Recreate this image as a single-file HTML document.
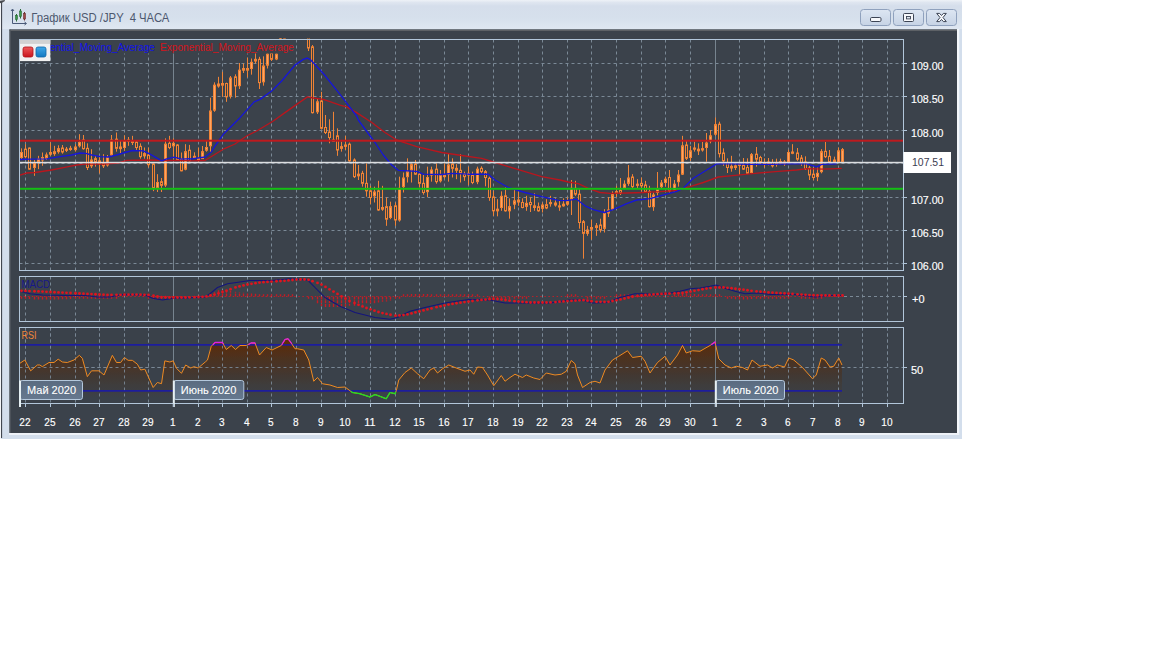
<!DOCTYPE html>
<html lang="ru"><head><meta charset="utf-8"><title>График USD /JPY 4 ЧАСА</title>
<style>html,body{margin:0;padding:0;background:#fff;}body{width:1152px;height:648px;overflow:hidden;position:relative;font-family:"Liberation Sans", sans-serif;}svg{position:absolute;left:0;top:0;display:block}text{font-family:"Liberation Sans", sans-serif;}</style>
</head><body>
<svg width="1152" height="648" viewBox="0 0 1152 648">
<defs>
<linearGradient id="tb" x1="0" y1="0" x2="0" y2="1"><stop offset="0" stop-color="#eef2f7"/><stop offset="0.08" stop-color="#dfe6f0"/><stop offset="0.2" stop-color="#d5deeb"/><stop offset="0.6" stop-color="#d6e0ec"/><stop offset="1" stop-color="#e0e8f2"/></linearGradient>
<linearGradient id="btn" x1="0" y1="0" x2="0" y2="1"><stop offset="0" stop-color="#dde6f2"/><stop offset="1" stop-color="#c6d3e5"/></linearGradient>
<linearGradient id="rsif" x1="0" y1="0" x2="0" y2="1"><stop offset="0" stop-color="#602c06"/><stop offset="0.3" stop-color="#4d3220"/><stop offset="0.6" stop-color="#423a35"/><stop offset="0.92" stop-color="#3b424b"/></linearGradient>
<linearGradient id="redsq" x1="0" y1="0" x2="0" y2="1"><stop offset="0" stop-color="#f05a5a"/><stop offset="1" stop-color="#c8141c"/></linearGradient>
<linearGradient id="blusq" x1="0" y1="0" x2="0" y2="1"><stop offset="0" stop-color="#3fa8e8"/><stop offset="1" stop-color="#1278c0"/></linearGradient>
<linearGradient id="mon" x1="0" y1="0" x2="0" y2="1"><stop offset="0" stop-color="#5a6b80"/><stop offset="1" stop-color="#66798f"/></linearGradient>
<clipPath id="cm"><rect x="19.5" y="38.5" width="884" height="232"/></clipPath>
<clipPath id="cr"><rect x="19.5" y="327.5" width="884" height="76"/></clipPath>
</defs>
<rect x="0" y="0" width="962" height="30" fill="url(#tb)"/><rect x="0" y="29.5" width="962" height="409.5" fill="#d3deec"/>
<rect x="2" y="29" width="960" height="410" fill="#d3deec"/>
<rect x="0" y="0" width="1.1" height="439" fill="#f4f6f9"/>
<rect x="1.05" y="1.5" width="1.05" height="436.5" fill="#3a3f48"/>
<path d="M0 0.8 L4.6 0 L5 0.9 L1.2 3.2 L0 3 Z" fill="#4a4c50"/>
<rect x="957" y="29" width="2.2" height="406" fill="#f4f7fb"/>
<rect x="9" y="433" width="950" height="2" fill="#eef2f8"/>
<rect x="9.5" y="29.5" width="947.5" height="403.5" fill="#3b424b"/>
<rect x="9.5" y="29.5" width="947.5" height="1.5" fill="#5d6166"/>
<rect x="9.5" y="29.5" width="1.2" height="403.5" fill="#555a61"/>
<g stroke="#4a5a78" stroke-width="1" fill="none"><path d="M12.5 9.5 V23.5 H26"/><path d="M11 11 L12.5 9 L14 11"/><path d="M24.5 22 L26.5 23.5 L24.5 25"/></g>
<g><line x1="16.5" y1="14" x2="16.5" y2="21.5" stroke="#2c6a38" stroke-width="1"/><rect x="15.5" y="15.5" width="2" height="4" fill="#3a9a4a" stroke="#2c6a38" stroke-width="0.6"/>
<line x1="20.5" y1="9" x2="20.5" y2="18.5" stroke="#2c6a38" stroke-width="1"/><rect x="19.5" y="11" width="2" height="5.5" fill="#3a9a4a" stroke="#2c6a38" stroke-width="0.6"/>
<line x1="24.5" y1="12" x2="24.5" y2="20.5" stroke="#6a3030" stroke-width="1"/><rect x="23.5" y="13.5" width="2" height="5.5" fill="#a04848" stroke="#6a3030" stroke-width="0.6"/></g>
<text x="31.3" y="22" font-size="12" fill="#4d586f" textLength="138" lengthAdjust="spacingAndGlyphs" xml:space="preserve">График USD /JPY  4 ЧАСА</text>
<rect x="860.5" y="9.5" width="30" height="16" rx="3" ry="3" fill="url(#btn)" stroke="#8fa1bd" stroke-width="1"/>
<rect x="893.5" y="9.5" width="30" height="16" rx="3" ry="3" fill="url(#btn)" stroke="#8fa1bd" stroke-width="1"/>
<rect x="926.5" y="9.5" width="30" height="16" rx="3" ry="3" fill="url(#btn)" stroke="#8fa1bd" stroke-width="1"/>
<rect x="870.5" y="17.5" width="10.5" height="4" rx="1.2" fill="#f6f8fb" stroke="#3c4454" stroke-width="1"/>
<rect x="903.5" y="13.5" width="10" height="8" rx="1" fill="#f6f8fb" stroke="#3c4454" stroke-width="1"/><rect x="906.5" y="16.5" width="4" height="2.4" fill="#dfe6f0" stroke="#3c4454" stroke-width="0.9"/>
<path d="M936.7 13.4 H939.6 L941.5 15.5 L943.4 13.4 H946.3 L943 17.5 L946.3 21.6 H943.4 L941.5 19.5 L939.6 21.6 H936.7 L940 17.5 Z" fill="#f6f8fb" stroke="#3c4454" stroke-width="1" stroke-linejoin="round"/>
<g id="main">
<line x1="25.5" y1="39.5" x2="25.5" y2="270.5" stroke="#7b8996" stroke-width="1" stroke-dasharray="3 3"/><line x1="50.5" y1="39.5" x2="50.5" y2="270.5" stroke="#7b8996" stroke-width="1" stroke-dasharray="3 3"/><line x1="75.5" y1="39.5" x2="75.5" y2="270.5" stroke="#7b8996" stroke-width="1" stroke-dasharray="3 3"/><line x1="99.5" y1="39.5" x2="99.5" y2="270.5" stroke="#7b8996" stroke-width="1" stroke-dasharray="3 3"/><line x1="124.5" y1="39.5" x2="124.5" y2="270.5" stroke="#7b8996" stroke-width="1" stroke-dasharray="3 3"/><line x1="148.5" y1="39.5" x2="148.5" y2="270.5" stroke="#7b8996" stroke-width="1" stroke-dasharray="3 3"/><line x1="173.5" y1="39.5" x2="173.5" y2="270.5" stroke="#77848f" stroke-width="1"/><line x1="198.5" y1="39.5" x2="198.5" y2="270.5" stroke="#7b8996" stroke-width="1" stroke-dasharray="3 3"/><line x1="222.5" y1="39.5" x2="222.5" y2="270.5" stroke="#7b8996" stroke-width="1" stroke-dasharray="3 3"/><line x1="247.5" y1="39.5" x2="247.5" y2="270.5" stroke="#7b8996" stroke-width="1" stroke-dasharray="3 3"/><line x1="271.5" y1="39.5" x2="271.5" y2="270.5" stroke="#7b8996" stroke-width="1" stroke-dasharray="3 3"/><line x1="296.5" y1="39.5" x2="296.5" y2="270.5" stroke="#7b8996" stroke-width="1" stroke-dasharray="3 3"/><line x1="321.5" y1="39.5" x2="321.5" y2="270.5" stroke="#7b8996" stroke-width="1" stroke-dasharray="3 3"/><line x1="345.5" y1="39.5" x2="345.5" y2="270.5" stroke="#7b8996" stroke-width="1" stroke-dasharray="3 3"/><line x1="370.5" y1="39.5" x2="370.5" y2="270.5" stroke="#7b8996" stroke-width="1" stroke-dasharray="3 3"/><line x1="395.5" y1="39.5" x2="395.5" y2="270.5" stroke="#7b8996" stroke-width="1" stroke-dasharray="3 3"/><line x1="419.5" y1="39.5" x2="419.5" y2="270.5" stroke="#7b8996" stroke-width="1" stroke-dasharray="3 3"/><line x1="444.5" y1="39.5" x2="444.5" y2="270.5" stroke="#7b8996" stroke-width="1" stroke-dasharray="3 3"/><line x1="468.5" y1="39.5" x2="468.5" y2="270.5" stroke="#7b8996" stroke-width="1" stroke-dasharray="3 3"/><line x1="493.5" y1="39.5" x2="493.5" y2="270.5" stroke="#7b8996" stroke-width="1" stroke-dasharray="3 3"/><line x1="518.5" y1="39.5" x2="518.5" y2="270.5" stroke="#7b8996" stroke-width="1" stroke-dasharray="3 3"/><line x1="542.5" y1="39.5" x2="542.5" y2="270.5" stroke="#7b8996" stroke-width="1" stroke-dasharray="3 3"/><line x1="567.5" y1="39.5" x2="567.5" y2="270.5" stroke="#7b8996" stroke-width="1" stroke-dasharray="3 3"/><line x1="591.5" y1="39.5" x2="591.5" y2="270.5" stroke="#7b8996" stroke-width="1" stroke-dasharray="3 3"/><line x1="616.5" y1="39.5" x2="616.5" y2="270.5" stroke="#7b8996" stroke-width="1" stroke-dasharray="3 3"/><line x1="641.5" y1="39.5" x2="641.5" y2="270.5" stroke="#7b8996" stroke-width="1" stroke-dasharray="3 3"/><line x1="665.5" y1="39.5" x2="665.5" y2="270.5" stroke="#7b8996" stroke-width="1" stroke-dasharray="3 3"/><line x1="690.5" y1="39.5" x2="690.5" y2="270.5" stroke="#7b8996" stroke-width="1" stroke-dasharray="3 3"/><line x1="715.5" y1="39.5" x2="715.5" y2="270.5" stroke="#77848f" stroke-width="1"/><line x1="739.5" y1="39.5" x2="739.5" y2="270.5" stroke="#7b8996" stroke-width="1" stroke-dasharray="3 3"/><line x1="764.5" y1="39.5" x2="764.5" y2="270.5" stroke="#7b8996" stroke-width="1" stroke-dasharray="3 3"/><line x1="788.5" y1="39.5" x2="788.5" y2="270.5" stroke="#7b8996" stroke-width="1" stroke-dasharray="3 3"/><line x1="813.5" y1="39.5" x2="813.5" y2="270.5" stroke="#7b8996" stroke-width="1" stroke-dasharray="3 3"/><line x1="838.5" y1="39.5" x2="838.5" y2="270.5" stroke="#7b8996" stroke-width="1" stroke-dasharray="3 3"/><line x1="862.5" y1="39.5" x2="862.5" y2="270.5" stroke="#7b8996" stroke-width="1" stroke-dasharray="3 3"/><line x1="887.5" y1="39.5" x2="887.5" y2="270.5" stroke="#7b8996" stroke-width="1" stroke-dasharray="3 3"/>
<line x1="19.5" y1="63.5" x2="903.5" y2="63.5" stroke="#7b8996" stroke-width="1" stroke-dasharray="3 3"/>
<line x1="19.5" y1="96.5" x2="903.5" y2="96.5" stroke="#7b8996" stroke-width="1" stroke-dasharray="3 3"/>
<line x1="19.5" y1="130.5" x2="903.5" y2="130.5" stroke="#7b8996" stroke-width="1" stroke-dasharray="3 3"/>
<line x1="19.5" y1="163.5" x2="903.5" y2="163.5" stroke="#7b8996" stroke-width="1" stroke-dasharray="3 3"/>
<line x1="19.5" y1="197.5" x2="903.5" y2="197.5" stroke="#7b8996" stroke-width="1" stroke-dasharray="3 3"/>
<line x1="19.5" y1="230.5" x2="903.5" y2="230.5" stroke="#7b8996" stroke-width="1" stroke-dasharray="3 3"/>
<line x1="19.5" y1="263.5" x2="903.5" y2="263.5" stroke="#7b8996" stroke-width="1" stroke-dasharray="3 3"/>
<g clip-path="url(#cm)">
<path d="M21.5 148.33 V160 M25.5 144.17 V158.33 M29.5 147.5 V170 M34.5 160 V175.83 M38.5 155.83 V169.17 M42.5 152.5 V165.83 M46.5 152.5 V160 M50.5 142.5 V155.83 M54.5 145.83 V155.83 M58.5 145.33 V153.67 M62.5 145 V153.67 M66.5 147 V152 M70.5 145.83 V150.83 M75.5 144.17 V151.67 M79.5 134.17 V147.5 M83.5 135 V149.67 M87.5 143.33 V170 M91.5 149.17 V168 M95.5 155 V166.67 M99.5 156.67 V173.33 M103.5 154.17 V168 M107.5 155 V166.67 M111.5 135 V157 M116.5 132.5 V151.67 M120.5 140.83 V153.67 M124.5 135.33 V150.83 M128.5 137 V145.83 M132.5 135.83 V145 M136.5 140.83 V150 M140.5 143.33 V158.67 M144.5 147.5 V158.67 M148.5 147.5 V167.5 M153.5 163.33 V191.17 M157.5 174.17 V192 M161.5 178 V192 M165.5 138.33 V187 M169.5 135.83 V149.17 M173.5 138.33 V158.33 M177.5 144.17 V160.83 M181.5 152.5 V171.33 M185.5 144.17 V170.33 M189.5 144.9 V161.7 M194.5 152.3 V157.8 M198.5 147.6 V161.7 M202.5 146 V159 M206.5 140.7 V151.7 M210.5 97.7 V151.7 M214.5 82.33 V111.83 M218.5 76.83 V87.67 M222.5 71.83 V96.83 M226.5 82.67 V101.83 M230.5 76 V98.5 M235.5 74.33 V97.67 M239.5 63 V89 M243.5 63.5 V73 M247.5 57.67 V77.33 M251.5 58.5 V74.67 M255.5 52.67 V63.5 M259.5 56.83 V89 M263.5 56.33 V85.67 M267.5 52.67 V68.5 M271.5 52.67 V61 M276.5 52.67 V60.17 M280.5 37.6 V53 M284.5 37.6 V50 M288.5 0 V25 M292.5 0 V25 M296.5 0 V25 M300.5 0 V25 M304.5 0 V25 M308.5 30 V51 M312.5 45 V113.5 M317.5 98.5 V114 M321.5 91.8 V129.2 M325.5 115 V134 M329.5 119.3 V143.3 M333.5 111.8 V141.7 M337.5 128.33 V155.83 M341.5 141.67 V151.67 M345.5 135.83 V150 M349.5 142.5 V161.67 M354.5 158.33 V178 M358.5 165 V180 M362.5 170.83 V186.67 M366.5 163.33 V196.67 M370.5 185.83 V204.17 M374.5 186.67 V202.5 M378.5 180.83 V210.83 M382.5 185.83 V210.83 M386.5 197.5 V225.83 M390.5 201.67 V219.17 M395.5 202.5 V225.83 M399.5 176.67 V221.67 M403.5 172.5 V192.5 M407.5 158.33 V182.5 M411.5 163.33 V182.5 M415.5 160 V175 M419.5 173.33 V187.5 M423.5 175 V194.67 M427.5 166.67 V197 M431.5 166.67 V181.67 M436.5 163.33 V183.67 M440.5 170 V182.5 M444.5 163.33 V178.33 M448.5 154.17 V181.67 M452.5 158.33 V177.5 M456.5 164.17 V179.17 M460.5 154.17 V182.5 M464.5 171.67 V180.83 M468.5 166.67 V185 M472.5 171.67 V184.17 M477.5 166.67 V184.17 M481.5 166.33 V173.33 M485.5 170 V186.33 M489.5 176.67 V200.83 M493.5 190.83 V215.83 M497.5 199.17 V216.33 M501.5 191.33 V210.83 M505.5 187.5 V211.67 M509.5 198.33 V218.67 M514.5 190 V209.17 M518.5 191.67 V205.83 M522.5 198.33 V208.33 M526.5 195.83 V210.83 M530.5 197.5 V212 M534.5 193.33 V210.83 M538.5 202.5 V211.67 M542.5 202.5 V212.5 M546.5 199.17 V209.17 M550.5 195.83 V206.67 M555.5 198.33 V206.67 M559.5 200.83 V210.83 M563.5 198.33 V206.67 M567.5 197.5 V205.83 M571.5 180 V215 M575.5 180.83 V195.83 M579.5 188.33 V228.67 M583.5 220 V258.67 M587.5 225.83 V235.83 M591.5 219.67 V239.67 M596.5 223 V235.83 M600.5 218.67 V232.5 M604.5 209.17 V232.5 M608.5 197 V217 M612.5 191.33 V210.33 M616.5 185.83 V197 M620.5 178 V195 M624.5 180.33 V189.17 M628.5 165 V185.83 M632.5 174.17 V188.33 M637.5 179.17 V188.33 M641.5 177.5 V191.33 M645.5 180.83 V192.5 M649.5 185.83 V207.5 M653.5 192.5 V210.83 M657.5 172 V195.33 M661.5 180 V188.33 M665.5 176.67 V186.67 M669.5 170 V192.5 M674.5 180 V191.67 M678.5 170 V186.67 M682.5 135.83 V175 M686.5 140.83 V160 M690.5 145.83 V160.83 M694.5 141.67 V151.67 M698.5 143.33 V155 M702.5 142 V151.67 M706.5 133 V161.67 M710.5 130 V143.33 M715.5 117.5 V135.83 M719.5 121.67 V157.5 M723.5 148.33 V165.83 M727.5 158.33 V173 M731.5 155.83 V171.67 M735.5 163.33 V170 M739.5 163 V175 M743.5 158 V170 M747.5 158.33 V174.17 M751.5 153 V173.67 M756.5 147 V166.67 M760.5 155.83 V164.17 M764.5 158.33 V167.5 M768.5 158 V165.33 M772.5 159.17 V167.5 M776.5 158.67 V166.67 M780.5 158.67 V164.17 M784.5 160 V165.83 M788.5 149.67 V163.33 M792.5 144.17 V154.17 M797.5 148 V160.83 M801.5 155 V165.83 M805.5 156.33 V170 M809.5 165.83 V180 M813.5 167.5 V180.33 M817.5 167.5 V181.17 M821.5 149.17 V173.33 M825.5 142 V158 M829.5 150 V163.33 M834.5 156.67 V162.5 M838.5 147.5 V162.5 M842.5 148 V162.5" stroke="#f08336" stroke-width="1" fill="none"/>
<g stroke="#f08336" stroke-width="1">
<rect x="20.5" y="152.5" width="2" height="5" fill="#ffa562"/><rect x="24.5" y="149.17" width="2" height="7.5" fill="#43403e"/><rect x="28.5" y="148" width="2" height="21.17" fill="#43403e"/><rect x="33.5" y="163.33" width="2" height="4.17" fill="#ffa562"/><rect x="37.5" y="159.17" width="2" height="2.5" fill="#ffa562"/><rect x="41.5" y="157.5" width="2" height="2.5" fill="#ffa562"/><rect x="45.5" y="155" width="2" height="3.33" fill="#ffa562"/><rect x="49.5" y="152.5" width="2" height="1.67" fill="#ffa562"/><rect x="53.5" y="151.67" width="2" height="2" fill="#43403e"/><rect x="57.5" y="148.67" width="2" height="3" fill="#ffa562"/><rect x="61.5" y="148" width="2" height="4" fill="#43403e"/><rect x="65.5" y="149.17" width="2" height="1.2" fill="#ffa562"/><rect x="69.5" y="148.33" width="2" height="1.2" fill="#ffa562"/><rect x="74.5" y="147" width="2" height="2.67" fill="#ffa562"/><rect x="78.5" y="142.5" width="2" height="3.33" fill="#ffa562"/><rect x="82.5" y="140" width="2" height="8.67" fill="#43403e"/><rect x="86.5" y="148.33" width="2" height="19.17" fill="#43403e"/><rect x="90.5" y="160" width="2" height="5.83" fill="#ffa562"/><rect x="94.5" y="158.67" width="2" height="3.33" fill="#43403e"/><rect x="98.5" y="160.83" width="2" height="2.5" fill="#43403e"/><rect x="102.5" y="163.33" width="2" height="2.5" fill="#43403e"/><rect x="106.5" y="157.5" width="2" height="7.5" fill="#ffa562"/><rect x="110.5" y="140" width="2" height="15" fill="#ffa562"/><rect x="115.5" y="139.17" width="2" height="9.17" fill="#43403e"/><rect x="119.5" y="147" width="2" height="1.67" fill="#ffa562"/><rect x="123.5" y="140.83" width="2" height="6.67" fill="#ffa562"/><rect x="127.5" y="140" width="2" height="1.33" fill="#ffa562"/><rect x="131.5" y="141.33" width="2" height="1.2" fill="#43403e"/><rect x="135.5" y="142" width="2" height="5.5" fill="#43403e"/><rect x="139.5" y="146.33" width="2" height="10.33" fill="#43403e"/><rect x="143.5" y="153.67" width="2" height="2.17" fill="#ffa562"/><rect x="147.5" y="155" width="2" height="9.67" fill="#43403e"/><rect x="152.5" y="164.17" width="2" height="24.17" fill="#43403e"/><rect x="156.5" y="182.5" width="2" height="5.83" fill="#ffa562"/><rect x="160.5" y="181.67" width="2" height="3.67" fill="#43403e"/><rect x="164.5" y="144.17" width="2" height="40.83" fill="#ffa562"/><rect x="168.5" y="143.33" width="2" height="4.17" fill="#43403e"/><rect x="172.5" y="143.33" width="2" height="2.5" fill="#ffa562"/><rect x="176.5" y="145" width="2" height="15" fill="#43403e"/><rect x="180.5" y="159.17" width="2" height="11.67" fill="#43403e"/><rect x="184.5" y="151.67" width="2" height="17.5" fill="#ffa562"/><rect x="188.5" y="150.2" width="2" height="10.5" fill="#43403e"/><rect x="193.5" y="156.3" width="2" height="1.2" fill="#ffa562"/><rect x="197.5" y="158.4" width="2" height="1.4" fill="#43403e"/><rect x="201.5" y="151.7" width="2" height="6.9" fill="#ffa562"/><rect x="205.5" y="147.5" width="2" height="2.7" fill="#ffa562"/><rect x="209.5" y="111" width="2" height="34.8" fill="#ffa562"/><rect x="213.5" y="85.17" width="2" height="25" fill="#ffa562"/><rect x="217.5" y="84" width="2" height="2" fill="#ffa562"/><rect x="221.5" y="83.5" width="2" height="1.67" fill="#43403e"/><rect x="225.5" y="83.5" width="2" height="13.33" fill="#43403e"/><rect x="229.5" y="78" width="2" height="18" fill="#ffa562"/><rect x="234.5" y="76.83" width="2" height="9.17" fill="#43403e"/><rect x="238.5" y="70.17" width="2" height="15.5" fill="#ffa562"/><rect x="242.5" y="68.5" width="2" height="1.67" fill="#ffa562"/><rect x="246.5" y="68.5" width="2" height="1.67" fill="#43403e"/><rect x="250.5" y="62.33" width="2" height="6.17" fill="#ffa562"/><rect x="254.5" y="59.33" width="2" height="1.67" fill="#ffa562"/><rect x="258.5" y="59.33" width="2" height="23.33" fill="#43403e"/><rect x="262.5" y="66" width="2" height="15.83" fill="#ffa562"/><rect x="266.5" y="54" width="2" height="11.17" fill="#ffa562"/><rect x="270.5" y="53.5" width="2" height="5.83" fill="#43403e"/><rect x="275.5" y="54" width="2" height="5" fill="#ffa562"/><rect x="279.5" y="38" width="2" height="14" fill="#ffa562"/><rect x="283.5" y="38" width="2" height="7" fill="#43403e"/><rect x="287.5" y="5" width="2" height="15" fill="#ffa562"/><rect x="291.5" y="5" width="2" height="15" fill="#43403e"/><rect x="295.5" y="5" width="2" height="15" fill="#ffa562"/><rect x="299.5" y="5" width="2" height="15" fill="#43403e"/><rect x="303.5" y="5" width="2" height="15" fill="#ffa562"/><rect x="307.5" y="33" width="2" height="15" fill="#43403e"/><rect x="311.5" y="46.8" width="2" height="65.9" fill="#43403e"/><rect x="316.5" y="101.83" width="2" height="10" fill="#ffa562"/><rect x="320.5" y="101" width="2" height="27.3" fill="#43403e"/><rect x="324.5" y="127.5" width="2" height="5" fill="#43403e"/><rect x="328.5" y="132" width="2" height="5.5" fill="#43403e"/><rect x="332.5" y="140" width="2" height="1.3" fill="#43403e"/><rect x="336.5" y="135.83" width="2" height="14.17" fill="#43403e"/><rect x="340.5" y="146.67" width="2" height="1.67" fill="#ffa562"/><rect x="344.5" y="145" width="2" height="1.33" fill="#ffa562"/><rect x="348.5" y="144.17" width="2" height="16.67" fill="#43403e"/><rect x="353.5" y="160" width="2" height="16.67" fill="#43403e"/><rect x="357.5" y="174.17" width="2" height="1.67" fill="#ffa562"/><rect x="361.5" y="173.33" width="2" height="10" fill="#43403e"/><rect x="365.5" y="183.33" width="2" height="7.5" fill="#43403e"/><rect x="369.5" y="190.83" width="2" height="6.67" fill="#43403e"/><rect x="373.5" y="192" width="2" height="3.83" fill="#ffa562"/><rect x="377.5" y="190.83" width="2" height="19.17" fill="#43403e"/><rect x="381.5" y="207.5" width="2" height="1.67" fill="#ffa562"/><rect x="385.5" y="206.67" width="2" height="12.5" fill="#43403e"/><rect x="389.5" y="206.67" width="2" height="10.83" fill="#ffa562"/><rect x="394.5" y="205.83" width="2" height="14.17" fill="#43403e"/><rect x="398.5" y="188.33" width="2" height="31.67" fill="#ffa562"/><rect x="402.5" y="178" width="2" height="8.67" fill="#ffa562"/><rect x="406.5" y="171.67" width="2" height="5" fill="#ffa562"/><rect x="410.5" y="164.67" width="2" height="5.33" fill="#ffa562"/><rect x="414.5" y="164.17" width="2" height="10" fill="#43403e"/><rect x="418.5" y="174.17" width="2" height="9.17" fill="#43403e"/><rect x="422.5" y="183.33" width="2" height="9.17" fill="#43403e"/><rect x="426.5" y="177.5" width="2" height="14.17" fill="#ffa562"/><rect x="430.5" y="170" width="2" height="5" fill="#ffa562"/><rect x="435.5" y="169.17" width="2" height="12.5" fill="#43403e"/><rect x="439.5" y="175" width="2" height="5.83" fill="#ffa562"/><rect x="443.5" y="175" width="2" height="1.67" fill="#43403e"/><rect x="447.5" y="165" width="2" height="9.17" fill="#ffa562"/><rect x="451.5" y="164.17" width="2" height="4.17" fill="#43403e"/><rect x="455.5" y="168.33" width="2" height="2" fill="#43403e"/><rect x="459.5" y="170.33" width="2" height="3" fill="#43403e"/><rect x="463.5" y="174.17" width="2" height="2.5" fill="#43403e"/><rect x="467.5" y="173.33" width="2" height="1.67" fill="#ffa562"/><rect x="471.5" y="175" width="2" height="7.5" fill="#43403e"/><rect x="476.5" y="169.17" width="2" height="12.5" fill="#ffa562"/><rect x="480.5" y="168.33" width="2" height="3.33" fill="#43403e"/><rect x="484.5" y="171.67" width="2" height="5.83" fill="#43403e"/><rect x="488.5" y="178.33" width="2" height="19.17" fill="#43403e"/><rect x="492.5" y="197" width="2" height="13.83" fill="#43403e"/><rect x="496.5" y="209.17" width="2" height="1.67" fill="#ffa562"/><rect x="500.5" y="196.33" width="2" height="11.17" fill="#ffa562"/><rect x="504.5" y="195.83" width="2" height="15" fill="#43403e"/><rect x="508.5" y="206.67" width="2" height="4.17" fill="#ffa562"/><rect x="513.5" y="200.83" width="2" height="3.33" fill="#ffa562"/><rect x="517.5" y="200" width="2" height="2" fill="#43403e"/><rect x="521.5" y="202.5" width="2" height="5" fill="#43403e"/><rect x="525.5" y="203.33" width="2" height="3" fill="#ffa562"/><rect x="529.5" y="202.5" width="2" height="2.17" fill="#43403e"/><rect x="533.5" y="205.83" width="2" height="1.67" fill="#43403e"/><rect x="537.5" y="206.67" width="2" height="4.17" fill="#43403e"/><rect x="541.5" y="205" width="2" height="3.33" fill="#ffa562"/><rect x="545.5" y="204.67" width="2" height="3.33" fill="#43403e"/><rect x="549.5" y="202.5" width="2" height="1.2" fill="#ffa562"/><rect x="554.5" y="203" width="2" height="2" fill="#43403e"/><rect x="558.5" y="205.83" width="2" height="1.2" fill="#43403e"/><rect x="562.5" y="204.17" width="2" height="1.67" fill="#ffa562"/><rect x="566.5" y="201.67" width="2" height="2.5" fill="#ffa562"/><rect x="570.5" y="188.33" width="2" height="10.83" fill="#ffa562"/><rect x="574.5" y="188.33" width="2" height="5.83" fill="#43403e"/><rect x="578.5" y="194.17" width="2" height="28.33" fill="#43403e"/><rect x="582.5" y="221.67" width="2" height="11.67" fill="#43403e"/><rect x="586.5" y="230" width="2" height="3.33" fill="#ffa562"/><rect x="590.5" y="227.5" width="2" height="1.67" fill="#ffa562"/><rect x="595.5" y="225.83" width="2" height="1.67" fill="#ffa562"/><rect x="599.5" y="225" width="2" height="5" fill="#43403e"/><rect x="603.5" y="213.33" width="2" height="15" fill="#ffa562"/><rect x="607.5" y="210" width="2" height="3" fill="#ffa562"/><rect x="611.5" y="194.67" width="2" height="14.5" fill="#ffa562"/><rect x="615.5" y="191.67" width="2" height="1.67" fill="#ffa562"/><rect x="619.5" y="190.33" width="2" height="3" fill="#43403e"/><rect x="623.5" y="184.17" width="2" height="3.33" fill="#ffa562"/><rect x="627.5" y="178" width="2" height="5.33" fill="#ffa562"/><rect x="631.5" y="177" width="2" height="9.67" fill="#43403e"/><rect x="636.5" y="184.17" width="2" height="1.2" fill="#ffa562"/><rect x="640.5" y="183.33" width="2" height="2.5" fill="#43403e"/><rect x="644.5" y="185" width="2" height="6.67" fill="#43403e"/><rect x="648.5" y="191.67" width="2" height="15" fill="#43403e"/><rect x="652.5" y="195" width="2" height="11.67" fill="#ffa562"/><rect x="656.5" y="189.17" width="2" height="3.33" fill="#ffa562"/><rect x="660.5" y="183" width="2" height="3.67" fill="#ffa562"/><rect x="664.5" y="179.17" width="2" height="3.33" fill="#ffa562"/><rect x="668.5" y="177.5" width="2" height="13.33" fill="#43403e"/><rect x="673.5" y="184.17" width="2" height="6.67" fill="#ffa562"/><rect x="677.5" y="175" width="2" height="6.67" fill="#ffa562"/><rect x="681.5" y="145.83" width="2" height="28.33" fill="#ffa562"/><rect x="685.5" y="145" width="2" height="13.33" fill="#43403e"/><rect x="689.5" y="150.83" width="2" height="6.67" fill="#ffa562"/><rect x="693.5" y="148" width="2" height="1.2" fill="#ffa562"/><rect x="697.5" y="149.17" width="2" height="1.67" fill="#43403e"/><rect x="701.5" y="148.67" width="2" height="1.33" fill="#ffa562"/><rect x="705.5" y="143" width="2" height="4.5" fill="#ffa562"/><rect x="709.5" y="135.83" width="2" height="5" fill="#ffa562"/><rect x="714.5" y="124.67" width="2" height="9.5" fill="#ffa562"/><rect x="718.5" y="124.17" width="2" height="29.5" fill="#43403e"/><rect x="722.5" y="153" width="2" height="7.83" fill="#43403e"/><rect x="726.5" y="162.5" width="2" height="5" fill="#43403e"/><rect x="730.5" y="166.33" width="2" height="1.67" fill="#ffa562"/><rect x="734.5" y="165.83" width="2" height="1.67" fill="#43403e"/><rect x="738.5" y="164.17" width="2" height="1.2" fill="#ffa562"/><rect x="742.5" y="165" width="2" height="4.17" fill="#43403e"/><rect x="746.5" y="167.5" width="2" height="5.83" fill="#43403e"/><rect x="750.5" y="154.67" width="2" height="17.83" fill="#ffa562"/><rect x="755.5" y="154.17" width="2" height="5" fill="#43403e"/><rect x="759.5" y="157.5" width="2" height="4.5" fill="#43403e"/><rect x="763.5" y="162.5" width="2" height="1.67" fill="#43403e"/><rect x="767.5" y="162" width="2" height="1.33" fill="#ffa562"/><rect x="771.5" y="162.5" width="2" height="3.33" fill="#43403e"/><rect x="775.5" y="162.5" width="2" height="1.67" fill="#ffa562"/><rect x="779.5" y="161.67" width="2" height="1.67" fill="#ffa562"/><rect x="783.5" y="162" width="2" height="1.67" fill="#43403e"/><rect x="787.5" y="152.5" width="2" height="9.17" fill="#ffa562"/><rect x="791.5" y="152" width="2" height="1.33" fill="#43403e"/><rect x="796.5" y="153" width="2" height="6.17" fill="#43403e"/><rect x="800.5" y="158" width="2" height="4.5" fill="#43403e"/><rect x="804.5" y="162" width="2" height="6.67" fill="#43403e"/><rect x="808.5" y="168" width="2" height="7" fill="#43403e"/><rect x="812.5" y="174.17" width="2" height="3.33" fill="#43403e"/><rect x="816.5" y="173.33" width="2" height="3.33" fill="#ffa562"/><rect x="820.5" y="151.67" width="2" height="20" fill="#ffa562"/><rect x="824.5" y="151.33" width="2" height="5.33" fill="#43403e"/><rect x="828.5" y="156.33" width="2" height="5.67" fill="#43403e"/><rect x="833.5" y="160" width="2" height="1.67" fill="#ffa562"/><rect x="837.5" y="150.83" width="2" height="11.17" fill="#ffa562"/><rect x="841.5" y="149.67" width="2" height="12.33" fill="#ffa562"/>
</g>
<path d="M19.17 175.33 L26.67 173 L35 172.5 L51.67 170 L68.33 166.67 L76.67 165 L85 164.17 L103.33 164.17 L118.33 163 L126.67 160.33 L148.33 160 L160 160.5 L176.67 160.33 L190 160.67 L190 160.8 L205 160.5 L223.3 149.2 L235 144 L246.67 136 L256.67 131 L273.33 121 L285 112.67 L296.67 104.33 L307.5 96.83 L313.33 98 L323.33 99.33 L340 105.17 L346.67 106.83 L356.67 112.67 L373.33 123.5 L375 125 L385 132.5 L396.7 140 L416.7 146.7 L441.7 152.5 L461.7 155.5 L481.7 158.3 L495 162.5 L516.7 169.2 L541.7 176.7 L560 180 L568.3 182 L578.3 183.7 L588.3 188.3 L600 192.5 L610 193.3 L626.7 193 L643.3 192.5 L660 191.7 L676.7 190.5 L690 186.7 L703.3 182.5 L718.3 177 L735 175.3 L755 173.3 L778.3 171.3 L796.7 170 L806.7 168.7 L823.3 169.2 L841.7 168.3" stroke="#b8161e" stroke-width="1.35" fill="none" stroke-linejoin="round"/>
<path d="M19.17 159.5 L30 159.17 L46.67 158.83 L60 156.67 L71.67 155 L80 153 L85.83 153.33 L91.67 155 L100 156.67 L108.33 157 L116.67 155 L125 152.5 L132.5 150.5 L143.33 150.83 L149.17 153.67 L161.67 160.83 L165.83 159.17 L174.17 157.17 L181.67 159.17 L190 158.67 L190 159.2 L205 157 L211.7 151.7 L215 146 L223.33 134.33 L240 117.67 L254.17 101.83 L260 99.33 L271.67 91 L281.67 81 L295 65.17 L303.33 59.33 L307.5 58 L310.83 60.17 L313.33 62.67 L323.33 73.5 L340 94.33 L356.67 116 L358.3 120 L375 142.5 L383.3 155 L391.7 165 L398.3 170.3 L416.7 171.3 L423.3 174.2 L441.7 174.5 L451.7 173.3 L468.3 174.2 L488.3 174.2 L495 180 L508.3 187.5 L525 192.5 L541.7 196.7 L558.3 200.3 L566 200.6 L576.7 199.2 L585 205.8 L593.3 209.7 L604.2 212.5 L613.3 209.7 L626.7 203.7 L636.7 200 L650 198.7 L660 195.8 L676.7 191.3 L683.3 188.3 L693.3 178.3 L706.7 170 L716.7 163.9 L731.7 163.9 L751.7 164.4 L771.7 164.4 L788.3 163.8 L806.7 163.8 L816.7 166.9 L821.7 164.4 L836.7 163.8" stroke="#1616d8" stroke-width="1.35" fill="none" stroke-linejoin="round"/>
</g>
<rect x="19.5" y="139.7" width="884" height="2" fill="#be1a1e"/>
<rect x="19.5" y="187.8" width="884" height="2" fill="#14be14"/>
<rect x="19.5" y="161.8" width="884" height="1.5" fill="#dcdee0"/>
<rect x="20" y="40" width="276" height="13.5" fill="#3b424b"/>
<text x="21" y="51.4" font-size="11" fill="#1212e8" textLength="134" lengthAdjust="spacingAndGlyphs">Exponential_Moving_Average</text>
<text x="160" y="51.4" font-size="11" fill="#d4141c" textLength="134" lengthAdjust="spacingAndGlyphs">Exponential_Moving_Average</text>
<rect x="19" y="39.3" width="31.3" height="21.8" fill="#f1f1f1"/><rect x="19" y="39.3" width="31.3" height="4.6" fill="#d2d2d2"/>
<rect x="23" y="47" width="10" height="10" rx="2" fill="url(#redsq)" stroke="#b01018" stroke-width="0.8"/>
<rect x="36" y="47" width="10" height="10" rx="2" fill="url(#blusq)" stroke="#0f68a8" stroke-width="0.8"/>
<rect x="19.5" y="39.5" width="884" height="231" fill="none" stroke="#b2c6da" stroke-width="1"/>
<line x1="903.5" y1="63.5" x2="907" y2="63.5" stroke="#b2c6da" stroke-width="1"/>
<text x="911" y="70" font-size="11" fill="#ffffff" textLength="32.5" lengthAdjust="spacingAndGlyphs" stroke="#ffffff" stroke-width="0.15">109.00</text>
<line x1="903.5" y1="96.5" x2="907" y2="96.5" stroke="#b2c6da" stroke-width="1"/>
<text x="911" y="103" font-size="11" fill="#ffffff" textLength="32.5" lengthAdjust="spacingAndGlyphs" stroke="#ffffff" stroke-width="0.15">108.50</text>
<line x1="903.5" y1="130.5" x2="907" y2="130.5" stroke="#b2c6da" stroke-width="1"/>
<text x="911" y="137" font-size="11" fill="#ffffff" textLength="32.5" lengthAdjust="spacingAndGlyphs" stroke="#ffffff" stroke-width="0.15">108.00</text>
<line x1="903.5" y1="163.5" x2="907" y2="163.5" stroke="#b2c6da" stroke-width="1"/>
<text x="911" y="170" font-size="11" fill="#ffffff" textLength="32.5" lengthAdjust="spacingAndGlyphs" stroke="#ffffff" stroke-width="0.15">107.50</text>
<line x1="903.5" y1="197.5" x2="907" y2="197.5" stroke="#b2c6da" stroke-width="1"/>
<text x="911" y="204" font-size="11" fill="#ffffff" textLength="32.5" lengthAdjust="spacingAndGlyphs" stroke="#ffffff" stroke-width="0.15">107.00</text>
<line x1="903.5" y1="230.5" x2="907" y2="230.5" stroke="#b2c6da" stroke-width="1"/>
<text x="911" y="237" font-size="11" fill="#ffffff" textLength="32.5" lengthAdjust="spacingAndGlyphs" stroke="#ffffff" stroke-width="0.15">106.50</text>
<line x1="903.5" y1="263.5" x2="907" y2="263.5" stroke="#b2c6da" stroke-width="1"/>
<text x="911" y="270" font-size="11" fill="#ffffff" textLength="32.5" lengthAdjust="spacingAndGlyphs" stroke="#ffffff" stroke-width="0.15">106.00</text>
<rect x="903.5" y="152" width="47.5" height="21" fill="#ffffff"/>
<text x="912" y="166" font-size="11" fill="#3c3c50" textLength="32" lengthAdjust="spacingAndGlyphs">107.51</text>
</g>
<g id="macd">
<line x1="25.5" y1="276.5" x2="25.5" y2="321.5" stroke="#7b8996" stroke-width="1" stroke-dasharray="3 3"/><line x1="50.5" y1="276.5" x2="50.5" y2="321.5" stroke="#7b8996" stroke-width="1" stroke-dasharray="3 3"/><line x1="75.5" y1="276.5" x2="75.5" y2="321.5" stroke="#7b8996" stroke-width="1" stroke-dasharray="3 3"/><line x1="99.5" y1="276.5" x2="99.5" y2="321.5" stroke="#7b8996" stroke-width="1" stroke-dasharray="3 3"/><line x1="124.5" y1="276.5" x2="124.5" y2="321.5" stroke="#7b8996" stroke-width="1" stroke-dasharray="3 3"/><line x1="148.5" y1="276.5" x2="148.5" y2="321.5" stroke="#7b8996" stroke-width="1" stroke-dasharray="3 3"/><line x1="173.5" y1="276.5" x2="173.5" y2="321.5" stroke="#77848f" stroke-width="1"/><line x1="198.5" y1="276.5" x2="198.5" y2="321.5" stroke="#7b8996" stroke-width="1" stroke-dasharray="3 3"/><line x1="222.5" y1="276.5" x2="222.5" y2="321.5" stroke="#7b8996" stroke-width="1" stroke-dasharray="3 3"/><line x1="247.5" y1="276.5" x2="247.5" y2="321.5" stroke="#7b8996" stroke-width="1" stroke-dasharray="3 3"/><line x1="271.5" y1="276.5" x2="271.5" y2="321.5" stroke="#7b8996" stroke-width="1" stroke-dasharray="3 3"/><line x1="296.5" y1="276.5" x2="296.5" y2="321.5" stroke="#7b8996" stroke-width="1" stroke-dasharray="3 3"/><line x1="321.5" y1="276.5" x2="321.5" y2="321.5" stroke="#7b8996" stroke-width="1" stroke-dasharray="3 3"/><line x1="345.5" y1="276.5" x2="345.5" y2="321.5" stroke="#7b8996" stroke-width="1" stroke-dasharray="3 3"/><line x1="370.5" y1="276.5" x2="370.5" y2="321.5" stroke="#7b8996" stroke-width="1" stroke-dasharray="3 3"/><line x1="395.5" y1="276.5" x2="395.5" y2="321.5" stroke="#7b8996" stroke-width="1" stroke-dasharray="3 3"/><line x1="419.5" y1="276.5" x2="419.5" y2="321.5" stroke="#7b8996" stroke-width="1" stroke-dasharray="3 3"/><line x1="444.5" y1="276.5" x2="444.5" y2="321.5" stroke="#7b8996" stroke-width="1" stroke-dasharray="3 3"/><line x1="468.5" y1="276.5" x2="468.5" y2="321.5" stroke="#7b8996" stroke-width="1" stroke-dasharray="3 3"/><line x1="493.5" y1="276.5" x2="493.5" y2="321.5" stroke="#7b8996" stroke-width="1" stroke-dasharray="3 3"/><line x1="518.5" y1="276.5" x2="518.5" y2="321.5" stroke="#7b8996" stroke-width="1" stroke-dasharray="3 3"/><line x1="542.5" y1="276.5" x2="542.5" y2="321.5" stroke="#7b8996" stroke-width="1" stroke-dasharray="3 3"/><line x1="567.5" y1="276.5" x2="567.5" y2="321.5" stroke="#7b8996" stroke-width="1" stroke-dasharray="3 3"/><line x1="591.5" y1="276.5" x2="591.5" y2="321.5" stroke="#7b8996" stroke-width="1" stroke-dasharray="3 3"/><line x1="616.5" y1="276.5" x2="616.5" y2="321.5" stroke="#7b8996" stroke-width="1" stroke-dasharray="3 3"/><line x1="641.5" y1="276.5" x2="641.5" y2="321.5" stroke="#7b8996" stroke-width="1" stroke-dasharray="3 3"/><line x1="665.5" y1="276.5" x2="665.5" y2="321.5" stroke="#7b8996" stroke-width="1" stroke-dasharray="3 3"/><line x1="690.5" y1="276.5" x2="690.5" y2="321.5" stroke="#7b8996" stroke-width="1" stroke-dasharray="3 3"/><line x1="715.5" y1="276.5" x2="715.5" y2="321.5" stroke="#77848f" stroke-width="1"/><line x1="739.5" y1="276.5" x2="739.5" y2="321.5" stroke="#7b8996" stroke-width="1" stroke-dasharray="3 3"/><line x1="764.5" y1="276.5" x2="764.5" y2="321.5" stroke="#7b8996" stroke-width="1" stroke-dasharray="3 3"/><line x1="788.5" y1="276.5" x2="788.5" y2="321.5" stroke="#7b8996" stroke-width="1" stroke-dasharray="3 3"/><line x1="813.5" y1="276.5" x2="813.5" y2="321.5" stroke="#7b8996" stroke-width="1" stroke-dasharray="3 3"/><line x1="838.5" y1="276.5" x2="838.5" y2="321.5" stroke="#7b8996" stroke-width="1" stroke-dasharray="3 3"/><line x1="862.5" y1="276.5" x2="862.5" y2="321.5" stroke="#7b8996" stroke-width="1" stroke-dasharray="3 3"/><line x1="887.5" y1="276.5" x2="887.5" y2="321.5" stroke="#7b8996" stroke-width="1" stroke-dasharray="3 3"/>
<line x1="844" y1="296.5" x2="903.5" y2="296.5" stroke="#7b8996" stroke-width="1" stroke-dasharray="3 3"/>
<line x1="19.5" y1="296.5" x2="844" y2="296.5" stroke="#b8202a" stroke-width="1" stroke-dasharray="1.5 2.6"/>
<path d="M21.5 296.5 V298.7 M25.5 296.5 V298.7 M29.5 296.5 V299.06 M34.5 296.5 V299.47 M38.5 296.5 V299.68 M42.5 296.5 V299.88 M46.5 296.5 V299.75 M50.5 296.5 V299.64 M54.5 296.5 V299.51 M58.5 296.5 V299.39 M62.5 296.5 V299.27 M66.5 296.5 V299.16 M70.5 296.5 V298.98 M75.5 296.5 V298.73 M79.5 296.5 V298.7 M83.5 296.5 V298.7 M87.5 296.5 V298.7 M91.5 296.5 V298.7 M95.5 296.5 V298.99 M99.5 296.5 V299.02 M103.5 296.5 V298.82 M107.5 296.5 V298.7 M111.5 296.5 V298.7 M116.5 296.5 V298.7 M148.5 296.5 V298.7 M153.5 296.5 V299.23 M157.5 296.5 V299.12 M161.5 296.5 V299.26 M165.5 296.5 V298.8 M169.5 296.5 V298.7 M173.5 296.5 V298.7 M210.5 296.5 V294.3 M214.5 296.5 V291.89 M218.5 296.5 V290.26 M222.5 296.5 V290.06 M226.5 296.5 V289.94 M230.5 296.5 V290.64 M235.5 296.5 V291.75 M239.5 296.5 V292.15 M243.5 296.5 V292.52 M247.5 296.5 V292.88 M251.5 296.5 V293.14 M255.5 296.5 V293.78 M259.5 296.5 V294.3 M263.5 296.5 V294.3 M267.5 296.5 V294.3 M271.5 296.5 V294.3 M276.5 296.5 V294.3 M280.5 296.5 V294.3 M284.5 296.5 V294.3 M288.5 296.5 V294.3 M292.5 296.5 V294.3 M308.5 296.5 V298.7 M312.5 296.5 V300.3 M317.5 296.5 V303.6 M321.5 296.5 V305.88 M325.5 296.5 V307.33 M329.5 296.5 V307.33 M333.5 296.5 V307.33 M337.5 296.5 V307.33 M341.5 296.5 V307.08 M345.5 296.5 V306.42 M349.5 296.5 V305.75 M354.5 296.5 V305.67 M358.5 296.5 V305.08 M362.5 296.5 V304.42 M366.5 296.5 V303.88 M370.5 296.5 V303.54 M374.5 296.5 V303.21 M378.5 296.5 V302.41 M382.5 296.5 V301.83 M386.5 296.5 V301.43 M390.5 296.5 V300.86 M395.5 296.5 V298.75 M399.5 296.5 V298.7 M403.5 296.5 V294.3 M407.5 296.5 V294.3 M411.5 296.5 V294 M415.5 296.5 V294 M419.5 296.5 V294 M423.5 296.5 V294 M427.5 296.5 V294.06 M431.5 296.5 V294.16 M436.5 296.5 V294.24 M440.5 296.5 V294.2 M444.5 296.5 V294.17 M448.5 296.5 V294.3 M452.5 296.5 V294.3 M456.5 296.5 V294.3 M460.5 296.5 V294.3 M464.5 296.5 V294.3 M468.5 296.5 V294.3 M472.5 296.5 V294.3 M477.5 296.5 V294.3 M489.5 296.5 V298.7 M493.5 296.5 V298.7 M497.5 296.5 V298.94 M501.5 296.5 V299.24 M505.5 296.5 V299.44 M509.5 296.5 V298.94 M514.5 296.5 V298.7 M518.5 296.5 V298.7 M522.5 296.5 V298.7 M526.5 296.5 V298.7 M567.5 296.5 V294.3 M571.5 296.5 V294.3 M575.5 296.5 V294.3 M587.5 296.5 V298.7 M591.5 296.5 V298.7 M596.5 296.5 V298.7 M600.5 296.5 V298.7 M604.5 296.5 V298.7 M616.5 296.5 V294.3 M620.5 296.5 V294.3 M624.5 296.5 V294.3 M628.5 296.5 V294.25 M632.5 296.5 V294.12 M637.5 296.5 V294.2 M641.5 296.5 V294.3 M645.5 296.5 V294.3 M649.5 296.5 V294.3 M674.5 296.5 V294.3 M678.5 296.5 V294.3 M682.5 296.5 V294.12 M686.5 296.5 V293.85 M690.5 296.5 V293.65 M694.5 296.5 V294.07 M698.5 296.5 V294.3 M702.5 296.5 V294.3 M706.5 296.5 V294.3 M710.5 296.5 V294.3 M715.5 296.5 V294.15 M719.5 296.5 V294.3 M727.5 296.5 V298.7 M731.5 296.5 V298.7 M735.5 296.5 V299.15 M739.5 296.5 V299.68 M743.5 296.5 V300.16 M747.5 296.5 V299.85 M751.5 296.5 V299.08 M756.5 296.5 V298.7 M760.5 296.5 V298.7 M764.5 296.5 V298.7 M768.5 296.5 V298.7 M772.5 296.5 V298.7 M776.5 296.5 V298.7 M780.5 296.5 V298.7 M784.5 296.5 V298.7 M788.5 296.5 V298.7 M801.5 296.5 V298.7 M805.5 296.5 V298.7 M809.5 296.5 V298.7 M813.5 296.5 V298.7 M817.5 296.5 V298.7 M821.5 296.5 V298.7" stroke="#c41c24" stroke-width="1.4" stroke-dasharray="3 0.8" fill="none"/>
<path d="M20 291.25 L30 293.75 L42.5 295 L67.5 295.5 L85 295.5 L97.5 297 L110 297 L122.5 294.5 L145 295 L152.5 298.25 L162.5 300 L175 298 L185 298 L205 297 L210 293.75 L217.5 287.5 L227.5 283.75 L240 282 L250 280.5 L272.5 280.5 L290 278.75 L307.5 280 L315 287.5 L325 297.5 L340 306.25 L355 312.5 L375 317.5 L390 319.25 L397.5 317.5 L410 311.25 L425 307.5 L445 303 L460 300.75 L470 299.5 L490 300 L505 303 L525 303 L550 303 L570 300 L582.5 300 L592.5 303 L607.5 302.5 L620 297.5 L635 293.75 L645 293.75 L655 294.5 L670 293 L680 291.25 L690 288.75 L700 288 L710 286.25 L716.25 285 L722.5 287.5 L735 291.25 L745 293.75 L757.5 293 L770 294.5 L795 294.5 L815 297 L830 295.5 L843.75 295.5" stroke="#14147c" stroke-width="1.05" fill="none"/>
<g fill="#e0141e"><circle cx="21.5" cy="290.8" r="1.4"/><circle cx="25.5" cy="290.93" r="1.4"/><circle cx="29.5" cy="291.07" r="1.4"/><circle cx="34.5" cy="291.23" r="1.4"/><circle cx="38.5" cy="291.43" r="1.4"/><circle cx="42.5" cy="291.62" r="1.4"/><circle cx="46.5" cy="291.82" r="1.4"/><circle cx="50.5" cy="292.02" r="1.4"/><circle cx="54.5" cy="292.23" r="1.4"/><circle cx="58.5" cy="292.43" r="1.4"/><circle cx="62.5" cy="292.62" r="1.4"/><circle cx="66.5" cy="292.82" r="1.4"/><circle cx="70.5" cy="293.02" r="1.4"/><circle cx="75.5" cy="293.27" r="1.4"/><circle cx="79.5" cy="293.48" r="1.4"/><circle cx="83.5" cy="293.68" r="1.4"/><circle cx="87.5" cy="293.88" r="1.4"/><circle cx="91.5" cy="294.07" r="1.4"/><circle cx="95.5" cy="294.27" r="1.4"/><circle cx="99.5" cy="294.48" r="1.4"/><circle cx="103.5" cy="294.68" r="1.4"/><circle cx="107.5" cy="294.88" r="1.4"/><circle cx="111.5" cy="294.97" r="1.4"/><circle cx="116.5" cy="294.87" r="1.4"/><circle cx="120.5" cy="294.79" r="1.4"/><circle cx="124.5" cy="294.71" r="1.4"/><circle cx="128.5" cy="294.63" r="1.4"/><circle cx="132.5" cy="294.55" r="1.4"/><circle cx="136.5" cy="294.55" r="1.4"/><circle cx="140.5" cy="294.68" r="1.4"/><circle cx="144.5" cy="294.82" r="1.4"/><circle cx="148.5" cy="294.95" r="1.4"/><circle cx="153.5" cy="295.7" r="1.4"/><circle cx="157.5" cy="296.5" r="1.4"/><circle cx="161.5" cy="297.06" r="1.4"/><circle cx="165.5" cy="297.22" r="1.4"/><circle cx="169.5" cy="297.38" r="1.4"/><circle cx="173.5" cy="297.5" r="1.4"/><circle cx="177.5" cy="297.5" r="1.4"/><circle cx="181.5" cy="297.5" r="1.4"/><circle cx="185.5" cy="297.48" r="1.4"/><circle cx="189.5" cy="297.33" r="1.4"/><circle cx="194.5" cy="297.14" r="1.4"/><circle cx="198.5" cy="296.99" r="1.4"/><circle cx="202.5" cy="296.84" r="1.4"/><circle cx="206.5" cy="296.41" r="1.4"/><circle cx="210.5" cy="295.51" r="1.4"/><circle cx="214.5" cy="294.61" r="1.4"/><circle cx="218.5" cy="293.36" r="1.4"/><circle cx="222.5" cy="292.06" r="1.4"/><circle cx="226.5" cy="290.69" r="1.4"/><circle cx="230.5" cy="289.19" r="1.4"/><circle cx="235.5" cy="287.38" r="1.4"/><circle cx="239.5" cy="286.42" r="1.4"/><circle cx="243.5" cy="285.46" r="1.4"/><circle cx="247.5" cy="284.5" r="1.4"/><circle cx="251.5" cy="283.86" r="1.4"/><circle cx="255.5" cy="283.22" r="1.4"/><circle cx="259.5" cy="282.58" r="1.4"/><circle cx="263.5" cy="282.22" r="1.4"/><circle cx="267.5" cy="281.9" r="1.4"/><circle cx="271.5" cy="281.58" r="1.4"/><circle cx="276.5" cy="281.26" r="1.4"/><circle cx="280.5" cy="281.02" r="1.4"/><circle cx="284.5" cy="280.78" r="1.4"/><circle cx="288.5" cy="280.4" r="1.4"/><circle cx="292.5" cy="280" r="1.4"/><circle cx="296.5" cy="279.6" r="1.4"/><circle cx="300.5" cy="279.5" r="1.4"/><circle cx="304.5" cy="279.5" r="1.4"/><circle cx="308.5" cy="279.84" r="1.4"/><circle cx="312.5" cy="281.2" r="1.4"/><circle cx="317.5" cy="282.9" r="1.4"/><circle cx="321.5" cy="284.62" r="1.4"/><circle cx="325.5" cy="286.96" r="1.4"/><circle cx="329.5" cy="289.29" r="1.4"/><circle cx="333.5" cy="291.62" r="1.4"/><circle cx="337.5" cy="293.96" r="1.4"/><circle cx="341.5" cy="296.29" r="1.4"/><circle cx="345.5" cy="298.62" r="1.4"/><circle cx="349.5" cy="300.96" r="1.4"/><circle cx="354.5" cy="303.12" r="1.4"/><circle cx="358.5" cy="304.79" r="1.4"/><circle cx="362.5" cy="306.46" r="1.4"/><circle cx="366.5" cy="308" r="1.4"/><circle cx="370.5" cy="309.33" r="1.4"/><circle cx="374.5" cy="310.67" r="1.4"/><circle cx="378.5" cy="312" r="1.4"/><circle cx="382.5" cy="313.04" r="1.4"/><circle cx="386.5" cy="313.91" r="1.4"/><circle cx="390.5" cy="314.77" r="1.4"/><circle cx="395.5" cy="315.71" r="1.4"/><circle cx="399.5" cy="315.41" r="1.4"/><circle cx="403.5" cy="315.11" r="1.4"/><circle cx="407.5" cy="314.38" r="1.4"/><circle cx="411.5" cy="313.38" r="1.4"/><circle cx="415.5" cy="312.38" r="1.4"/><circle cx="419.5" cy="311.38" r="1.4"/><circle cx="423.5" cy="310.38" r="1.4"/><circle cx="427.5" cy="309.38" r="1.4"/><circle cx="431.5" cy="308.38" r="1.4"/><circle cx="436.5" cy="307.18" r="1.4"/><circle cx="440.5" cy="306.31" r="1.4"/><circle cx="444.5" cy="305.44" r="1.4"/><circle cx="448.5" cy="304.57" r="1.4"/><circle cx="452.5" cy="303.88" r="1.4"/><circle cx="456.5" cy="303.27" r="1.4"/><circle cx="460.5" cy="302.68" r="1.4"/><circle cx="464.5" cy="302.07" r="1.4"/><circle cx="468.5" cy="301.53" r="1.4"/><circle cx="472.5" cy="301" r="1.4"/><circle cx="477.5" cy="300.33" r="1.4"/><circle cx="481.5" cy="299.88" r="1.4"/><circle cx="485.5" cy="299.54" r="1.4"/><circle cx="489.5" cy="299.21" r="1.4"/><circle cx="493.5" cy="298.88" r="1.4"/><circle cx="497.5" cy="299.06" r="1.4"/><circle cx="501.5" cy="299.56" r="1.4"/><circle cx="505.5" cy="300.06" r="1.4"/><circle cx="509.5" cy="300.56" r="1.4"/><circle cx="514.5" cy="301.19" r="1.4"/><circle cx="518.5" cy="301.54" r="1.4"/><circle cx="522.5" cy="301.88" r="1.4"/><circle cx="526.5" cy="302.21" r="1.4"/><circle cx="530.5" cy="302.5" r="1.4"/><circle cx="534.5" cy="302.5" r="1.4"/><circle cx="538.5" cy="302.5" r="1.4"/><circle cx="542.5" cy="302.5" r="1.4"/><circle cx="546.5" cy="302.5" r="1.4"/><circle cx="550.5" cy="302.46" r="1.4"/><circle cx="555.5" cy="302.04" r="1.4"/><circle cx="559.5" cy="301.71" r="1.4"/><circle cx="563.5" cy="301.38" r="1.4"/><circle cx="567.5" cy="301.1" r="1.4"/><circle cx="571.5" cy="300.86" r="1.4"/><circle cx="575.5" cy="300.62" r="1.4"/><circle cx="579.5" cy="300.3" r="1.4"/><circle cx="583.5" cy="300.14" r="1.4"/><circle cx="587.5" cy="300.7" r="1.4"/><circle cx="591.5" cy="301.26" r="1.4"/><circle cx="596.5" cy="301.78" r="1.4"/><circle cx="600.5" cy="301.86" r="1.4"/><circle cx="604.5" cy="301.94" r="1.4"/><circle cx="608.5" cy="301.8" r="1.4"/><circle cx="612.5" cy="301" r="1.4"/><circle cx="616.5" cy="300.2" r="1.4"/><circle cx="620.5" cy="299.39" r="1.4"/><circle cx="624.5" cy="298.51" r="1.4"/><circle cx="628.5" cy="297.63" r="1.4"/><circle cx="632.5" cy="296.75" r="1.4"/><circle cx="637.5" cy="296.05" r="1.4"/><circle cx="641.5" cy="295.49" r="1.4"/><circle cx="645.5" cy="294.97" r="1.4"/><circle cx="649.5" cy="294.72" r="1.4"/><circle cx="653.5" cy="294.47" r="1.4"/><circle cx="657.5" cy="294.22" r="1.4"/><circle cx="661.5" cy="293.97" r="1.4"/><circle cx="665.5" cy="293.73" r="1.4"/><circle cx="669.5" cy="293.56" r="1.4"/><circle cx="674.5" cy="293.34" r="1.4"/><circle cx="678.5" cy="293.17" r="1.4"/><circle cx="682.5" cy="293" r="1.4"/><circle cx="686.5" cy="292.28" r="1.4"/><circle cx="690.5" cy="291.56" r="1.4"/><circle cx="694.5" cy="290.84" r="1.4"/><circle cx="698.5" cy="290.05" r="1.4"/><circle cx="702.5" cy="289.25" r="1.4"/><circle cx="706.5" cy="288.56" r="1.4"/><circle cx="710.5" cy="288.06" r="1.4"/><circle cx="715.5" cy="287.5" r="1.4"/><circle cx="719.5" cy="287.5" r="1.4"/><circle cx="723.5" cy="287.5" r="1.4"/><circle cx="727.5" cy="287.79" r="1.4"/><circle cx="731.5" cy="288.26" r="1.4"/><circle cx="735.5" cy="288.73" r="1.4"/><circle cx="739.5" cy="289.19" r="1.4"/><circle cx="743.5" cy="289.72" r="1.4"/><circle cx="747.5" cy="290.25" r="1.4"/><circle cx="751.5" cy="290.78" r="1.4"/><circle cx="756.5" cy="291.38" r="1.4"/><circle cx="760.5" cy="291.71" r="1.4"/><circle cx="764.5" cy="292.04" r="1.4"/><circle cx="768.5" cy="292.38" r="1.4"/><circle cx="772.5" cy="292.66" r="1.4"/><circle cx="776.5" cy="292.91" r="1.4"/><circle cx="780.5" cy="293.16" r="1.4"/><circle cx="784.5" cy="293.41" r="1.4"/><circle cx="788.5" cy="293.66" r="1.4"/><circle cx="792.5" cy="293.93" r="1.4"/><circle cx="797.5" cy="294.29" r="1.4"/><circle cx="801.5" cy="294.57" r="1.4"/><circle cx="805.5" cy="294.86" r="1.4"/><circle cx="809.5" cy="295.08" r="1.4"/><circle cx="813.5" cy="295.24" r="1.4"/><circle cx="817.5" cy="295.4" r="1.4"/><circle cx="821.5" cy="295.5" r="1.4"/><circle cx="825.5" cy="295.5" r="1.4"/><circle cx="829.5" cy="295.5" r="1.4"/><circle cx="834.5" cy="295.5" r="1.4"/><circle cx="838.5" cy="295.5" r="1.4"/><circle cx="842.5" cy="295.5" r="1.4"/></g>
<text x="21.5" y="288" font-size="11" fill="#18188a" textLength="28.5" lengthAdjust="spacingAndGlyphs">MACD</text>
<rect x="19.5" y="276.5" width="884" height="45" fill="none" stroke="#b2c6da" stroke-width="1"/>
<line x1="903.5" y1="296.5" x2="907" y2="296.5" stroke="#b2c6da" stroke-width="1"/>
<text x="912" y="303" font-size="11" fill="#ffffff" stroke="#ffffff" stroke-width="0.15">+0</text>
</g>
<g id="rsi">
<line x1="25.5" y1="327.5" x2="25.5" y2="403.5" stroke="#7b8996" stroke-width="1" stroke-dasharray="3 3"/><line x1="50.5" y1="327.5" x2="50.5" y2="403.5" stroke="#7b8996" stroke-width="1" stroke-dasharray="3 3"/><line x1="75.5" y1="327.5" x2="75.5" y2="403.5" stroke="#7b8996" stroke-width="1" stroke-dasharray="3 3"/><line x1="99.5" y1="327.5" x2="99.5" y2="403.5" stroke="#7b8996" stroke-width="1" stroke-dasharray="3 3"/><line x1="124.5" y1="327.5" x2="124.5" y2="403.5" stroke="#7b8996" stroke-width="1" stroke-dasharray="3 3"/><line x1="148.5" y1="327.5" x2="148.5" y2="403.5" stroke="#7b8996" stroke-width="1" stroke-dasharray="3 3"/><line x1="173.5" y1="327.5" x2="173.5" y2="403.5" stroke="#77848f" stroke-width="1"/><line x1="198.5" y1="327.5" x2="198.5" y2="403.5" stroke="#7b8996" stroke-width="1" stroke-dasharray="3 3"/><line x1="222.5" y1="327.5" x2="222.5" y2="403.5" stroke="#7b8996" stroke-width="1" stroke-dasharray="3 3"/><line x1="247.5" y1="327.5" x2="247.5" y2="403.5" stroke="#7b8996" stroke-width="1" stroke-dasharray="3 3"/><line x1="271.5" y1="327.5" x2="271.5" y2="403.5" stroke="#7b8996" stroke-width="1" stroke-dasharray="3 3"/><line x1="296.5" y1="327.5" x2="296.5" y2="403.5" stroke="#7b8996" stroke-width="1" stroke-dasharray="3 3"/><line x1="321.5" y1="327.5" x2="321.5" y2="403.5" stroke="#7b8996" stroke-width="1" stroke-dasharray="3 3"/><line x1="345.5" y1="327.5" x2="345.5" y2="403.5" stroke="#7b8996" stroke-width="1" stroke-dasharray="3 3"/><line x1="370.5" y1="327.5" x2="370.5" y2="403.5" stroke="#7b8996" stroke-width="1" stroke-dasharray="3 3"/><line x1="395.5" y1="327.5" x2="395.5" y2="403.5" stroke="#7b8996" stroke-width="1" stroke-dasharray="3 3"/><line x1="419.5" y1="327.5" x2="419.5" y2="403.5" stroke="#7b8996" stroke-width="1" stroke-dasharray="3 3"/><line x1="444.5" y1="327.5" x2="444.5" y2="403.5" stroke="#7b8996" stroke-width="1" stroke-dasharray="3 3"/><line x1="468.5" y1="327.5" x2="468.5" y2="403.5" stroke="#7b8996" stroke-width="1" stroke-dasharray="3 3"/><line x1="493.5" y1="327.5" x2="493.5" y2="403.5" stroke="#7b8996" stroke-width="1" stroke-dasharray="3 3"/><line x1="518.5" y1="327.5" x2="518.5" y2="403.5" stroke="#7b8996" stroke-width="1" stroke-dasharray="3 3"/><line x1="542.5" y1="327.5" x2="542.5" y2="403.5" stroke="#7b8996" stroke-width="1" stroke-dasharray="3 3"/><line x1="567.5" y1="327.5" x2="567.5" y2="403.5" stroke="#7b8996" stroke-width="1" stroke-dasharray="3 3"/><line x1="591.5" y1="327.5" x2="591.5" y2="403.5" stroke="#7b8996" stroke-width="1" stroke-dasharray="3 3"/><line x1="616.5" y1="327.5" x2="616.5" y2="403.5" stroke="#7b8996" stroke-width="1" stroke-dasharray="3 3"/><line x1="641.5" y1="327.5" x2="641.5" y2="403.5" stroke="#7b8996" stroke-width="1" stroke-dasharray="3 3"/><line x1="665.5" y1="327.5" x2="665.5" y2="403.5" stroke="#7b8996" stroke-width="1" stroke-dasharray="3 3"/><line x1="690.5" y1="327.5" x2="690.5" y2="403.5" stroke="#7b8996" stroke-width="1" stroke-dasharray="3 3"/><line x1="715.5" y1="327.5" x2="715.5" y2="403.5" stroke="#77848f" stroke-width="1"/><line x1="739.5" y1="327.5" x2="739.5" y2="403.5" stroke="#7b8996" stroke-width="1" stroke-dasharray="3 3"/><line x1="764.5" y1="327.5" x2="764.5" y2="403.5" stroke="#7b8996" stroke-width="1" stroke-dasharray="3 3"/><line x1="788.5" y1="327.5" x2="788.5" y2="403.5" stroke="#7b8996" stroke-width="1" stroke-dasharray="3 3"/><line x1="813.5" y1="327.5" x2="813.5" y2="403.5" stroke="#7b8996" stroke-width="1" stroke-dasharray="3 3"/><line x1="838.5" y1="327.5" x2="838.5" y2="403.5" stroke="#7b8996" stroke-width="1" stroke-dasharray="3 3"/><line x1="862.5" y1="327.5" x2="862.5" y2="403.5" stroke="#7b8996" stroke-width="1" stroke-dasharray="3 3"/><line x1="887.5" y1="327.5" x2="887.5" y2="403.5" stroke="#7b8996" stroke-width="1" stroke-dasharray="3 3"/>
<line x1="19.5" y1="367.5" x2="903.5" y2="367.5" stroke="#7b8996" stroke-width="1" stroke-dasharray="3 3"/>
<g clip-path="url(#cr)">
<path d="M19.83 363.33 L24.83 360 L30.67 370.83 L37.33 365 L39.83 365 L42.33 366.67 L49 362.5 L54 362.5 L58.17 359.17 L62.33 362 L67.33 362.5 L74 360 L79.33 355.33 L82.33 358.33 L87.33 376.67 L91.5 370.83 L99 370.83 L104 375 L112.33 355.33 L116.5 362.5 L120.67 362.5 L124.33 357.5 L128.17 360.33 L132.33 360.33 L137.33 364.17 L140.67 370 L144.83 369.17 L153.17 387.5 L157.33 382.5 L161.5 383.67 L164.83 360.83 L169.83 362 L173.17 360.83 L176.5 368.33 L181.5 373.33 L185.67 365 L190.67 368 L194 366.67 L198.17 368 L205.67 361.67 L207.5 360 L211.25 346.25 L215 342.5 L222.5 342.5 L226.25 349.5 L231.25 345.5 L235.5 349.5 L240 345.5 L246.25 345.5 L251.25 343 L255 343 L259.5 355 L266.25 347.5 L272 350 L281.25 345.5 L285 339.5 L288 338.75 L290 341.25 L292.5 345 L295 348.75 L297.5 348.75 L303.75 350 L308.75 360 L313.75 381.25 L317.5 377.5 L322.5 383.75 L330 385 L337.5 387.5 L345 387 L350 390.75 L352.5 392.5 L360 393.75 L370 397 L375 394.5 L386.25 398.75 L390 392.5 L395 393.75 L396.25 390.75 L398.75 380 L405 372.5 L411.25 368 L417.5 373.75 L423.75 378.75 L430 370 L433.75 368 L437.5 373 L442.5 368.75 L448.75 365 L455 367.5 L465 371.25 L470 370 L473.75 374.25 L477.5 367 L482.5 367.5 L487.5 375 L493.75 385.75 L501.25 375.5 L505 381.25 L510 377.5 L515 374.25 L522.5 377.5 L526.25 375 L533.75 378 L540 379.5 L546.25 373 L555 375 L561.25 374.25 L566.25 371.25 L571.25 360.5 L575 363.75 L577.5 375 L582.5 387.5 L590 382.5 L595 381.25 L600 383 L605 370 L612.5 360 L618.75 356.25 L627.5 350.75 L632.5 357.5 L641.25 356.25 L645 361.25 L650 373 L657.5 362.5 L665 356.25 L670 365 L677.5 355 L682.5 345.5 L686.25 353 L692.5 350.75 L700 351.25 L710 345.5 L715 342 L718.75 358.75 L725 365 L731.25 368 L736.25 366.25 L742.5 367.5 L747.5 370 L752 360 L760 366.25 L767.5 365 L772.5 368 L777.5 365 L784.5 367 L788.75 358 L793.75 360 L802.5 367.5 L812.5 378.75 L816.25 375 L821.25 358 L825 360 L830 367 L833.75 366.25 L838.75 358 L842 365 L842 403.5 L19.83 403.5 Z" fill="url(#rsif)" stroke="none"/>
<g opacity="0.9"><line x1="25.5" y1="327.5" x2="25.5" y2="403.5" stroke="#7b8996" stroke-width="1" stroke-dasharray="3 3"/><line x1="50.5" y1="327.5" x2="50.5" y2="403.5" stroke="#7b8996" stroke-width="1" stroke-dasharray="3 3"/><line x1="75.5" y1="327.5" x2="75.5" y2="403.5" stroke="#7b8996" stroke-width="1" stroke-dasharray="3 3"/><line x1="99.5" y1="327.5" x2="99.5" y2="403.5" stroke="#7b8996" stroke-width="1" stroke-dasharray="3 3"/><line x1="124.5" y1="327.5" x2="124.5" y2="403.5" stroke="#7b8996" stroke-width="1" stroke-dasharray="3 3"/><line x1="148.5" y1="327.5" x2="148.5" y2="403.5" stroke="#7b8996" stroke-width="1" stroke-dasharray="3 3"/><line x1="173.5" y1="327.5" x2="173.5" y2="403.5" stroke="#77848f" stroke-width="1"/><line x1="198.5" y1="327.5" x2="198.5" y2="403.5" stroke="#7b8996" stroke-width="1" stroke-dasharray="3 3"/><line x1="222.5" y1="327.5" x2="222.5" y2="403.5" stroke="#7b8996" stroke-width="1" stroke-dasharray="3 3"/><line x1="247.5" y1="327.5" x2="247.5" y2="403.5" stroke="#7b8996" stroke-width="1" stroke-dasharray="3 3"/><line x1="271.5" y1="327.5" x2="271.5" y2="403.5" stroke="#7b8996" stroke-width="1" stroke-dasharray="3 3"/><line x1="296.5" y1="327.5" x2="296.5" y2="403.5" stroke="#7b8996" stroke-width="1" stroke-dasharray="3 3"/><line x1="321.5" y1="327.5" x2="321.5" y2="403.5" stroke="#7b8996" stroke-width="1" stroke-dasharray="3 3"/><line x1="345.5" y1="327.5" x2="345.5" y2="403.5" stroke="#7b8996" stroke-width="1" stroke-dasharray="3 3"/><line x1="370.5" y1="327.5" x2="370.5" y2="403.5" stroke="#7b8996" stroke-width="1" stroke-dasharray="3 3"/><line x1="395.5" y1="327.5" x2="395.5" y2="403.5" stroke="#7b8996" stroke-width="1" stroke-dasharray="3 3"/><line x1="419.5" y1="327.5" x2="419.5" y2="403.5" stroke="#7b8996" stroke-width="1" stroke-dasharray="3 3"/><line x1="444.5" y1="327.5" x2="444.5" y2="403.5" stroke="#7b8996" stroke-width="1" stroke-dasharray="3 3"/><line x1="468.5" y1="327.5" x2="468.5" y2="403.5" stroke="#7b8996" stroke-width="1" stroke-dasharray="3 3"/><line x1="493.5" y1="327.5" x2="493.5" y2="403.5" stroke="#7b8996" stroke-width="1" stroke-dasharray="3 3"/><line x1="518.5" y1="327.5" x2="518.5" y2="403.5" stroke="#7b8996" stroke-width="1" stroke-dasharray="3 3"/><line x1="542.5" y1="327.5" x2="542.5" y2="403.5" stroke="#7b8996" stroke-width="1" stroke-dasharray="3 3"/><line x1="567.5" y1="327.5" x2="567.5" y2="403.5" stroke="#7b8996" stroke-width="1" stroke-dasharray="3 3"/><line x1="591.5" y1="327.5" x2="591.5" y2="403.5" stroke="#7b8996" stroke-width="1" stroke-dasharray="3 3"/><line x1="616.5" y1="327.5" x2="616.5" y2="403.5" stroke="#7b8996" stroke-width="1" stroke-dasharray="3 3"/><line x1="641.5" y1="327.5" x2="641.5" y2="403.5" stroke="#7b8996" stroke-width="1" stroke-dasharray="3 3"/><line x1="665.5" y1="327.5" x2="665.5" y2="403.5" stroke="#7b8996" stroke-width="1" stroke-dasharray="3 3"/><line x1="690.5" y1="327.5" x2="690.5" y2="403.5" stroke="#7b8996" stroke-width="1" stroke-dasharray="3 3"/><line x1="715.5" y1="327.5" x2="715.5" y2="403.5" stroke="#77848f" stroke-width="1"/><line x1="739.5" y1="327.5" x2="739.5" y2="403.5" stroke="#7b8996" stroke-width="1" stroke-dasharray="3 3"/><line x1="764.5" y1="327.5" x2="764.5" y2="403.5" stroke="#7b8996" stroke-width="1" stroke-dasharray="3 3"/><line x1="788.5" y1="327.5" x2="788.5" y2="403.5" stroke="#7b8996" stroke-width="1" stroke-dasharray="3 3"/><line x1="813.5" y1="327.5" x2="813.5" y2="403.5" stroke="#7b8996" stroke-width="1" stroke-dasharray="3 3"/><line x1="838.5" y1="327.5" x2="838.5" y2="403.5" stroke="#7b8996" stroke-width="1" stroke-dasharray="3 3"/><line x1="862.5" y1="327.5" x2="862.5" y2="403.5" stroke="#7b8996" stroke-width="1" stroke-dasharray="3 3"/><line x1="887.5" y1="327.5" x2="887.5" y2="403.5" stroke="#7b8996" stroke-width="1" stroke-dasharray="3 3"/></g>
<line x1="19.5" y1="367.5" x2="842" y2="367.5" stroke="#7b8996" stroke-width="1" stroke-dasharray="3 3" opacity="0.9"/>
<rect x="19.5" y="344.2" width="822.5" height="1.4" fill="#1616b4"/>
<rect x="19.5" y="390.2" width="822.5" height="1.4" fill="#1616b4"/>
<path d="M19.83 363.33 L24.83 360 L30.67 370.83 L37.33 365 L39.83 365 L42.33 366.67 L49 362.5 L54 362.5 L58.17 359.17 L62.33 362 L67.33 362.5 L74 360 L79.33 355.33 L82.33 358.33 L87.33 376.67 L91.5 370.83 L99 370.83 L104 375 L112.33 355.33 L116.5 362.5 L120.67 362.5 L124.33 357.5 L128.17 360.33 L132.33 360.33 L137.33 364.17 L140.67 370 L144.83 369.17 L153.17 387.5 L157.33 382.5 L161.5 383.67 L164.83 360.83 L169.83 362 L173.17 360.83 L176.5 368.33 L181.5 373.33 L185.67 365 L190.67 368 L194 366.67 L198.17 368 L205.67 361.67 L207.5 360 L211.25 346.25 L215 342.5 L222.5 342.5 L226.25 349.5 L231.25 345.5 L235.5 349.5 L240 345.5 L246.25 345.5 L251.25 343 L255 343 L259.5 355 L266.25 347.5 L272 350 L281.25 345.5 L285 339.5 L288 338.75 L290 341.25 L292.5 345 L295 348.75 L297.5 348.75 L303.75 350 L308.75 360 L313.75 381.25 L317.5 377.5 L322.5 383.75 L330 385 L337.5 387.5 L345 387 L350 390.75 L352.5 392.5 L360 393.75 L370 397 L375 394.5 L386.25 398.75 L390 392.5 L395 393.75 L396.25 390.75 L398.75 380 L405 372.5 L411.25 368 L417.5 373.75 L423.75 378.75 L430 370 L433.75 368 L437.5 373 L442.5 368.75 L448.75 365 L455 367.5 L465 371.25 L470 370 L473.75 374.25 L477.5 367 L482.5 367.5 L487.5 375 L493.75 385.75 L501.25 375.5 L505 381.25 L510 377.5 L515 374.25 L522.5 377.5 L526.25 375 L533.75 378 L540 379.5 L546.25 373 L555 375 L561.25 374.25 L566.25 371.25 L571.25 360.5 L575 363.75 L577.5 375 L582.5 387.5 L590 382.5 L595 381.25 L600 383 L605 370 L612.5 360 L618.75 356.25 L627.5 350.75 L632.5 357.5 L641.25 356.25 L645 361.25 L650 373 L657.5 362.5 L665 356.25 L670 365 L677.5 355 L682.5 345.5 L686.25 353 L692.5 350.75 L700 351.25 L710 345.5 L715 342 L718.75 358.75 L725 365 L731.25 368 L736.25 366.25 L742.5 367.5 L747.5 370 L752 360 L760 366.25 L767.5 365 L772.5 368 L777.5 365 L784.5 367 L788.75 358 L793.75 360 L802.5 367.5 L812.5 378.75 L816.25 375 L821.25 358 L825 360 L830 367 L833.75 366.25 L838.75 358 L842 365" stroke="#ee8a22" stroke-width="1" fill="none" stroke-linejoin="round"/>
<path d="M212.83 344.67 L213.33 344.17 L213.83 343.67 L214.33 343.17 L214.83 342.67 L215.33 342.5 L215.83 342.5 L216.33 342.5 L216.83 342.5 L217.33 342.5 L217.83 342.5 L218.33 342.5 L218.83 342.5 L219.33 342.5 L219.83 342.5 L220.33 342.5 L220.83 342.5 L221.33 342.5 L221.83 342.5 L222.33 342.5 L222.83 343.12 L223.33 344.06" stroke="#e020e0" stroke-width="1.3" fill="none"/>
<path d="M248.33 344.46 L248.83 344.21 L249.33 343.96 L249.83 343.71 L250.33 343.46 L250.83 343.21 L251.33 343 L251.83 343 L252.33 343 L252.83 343 L253.33 343 L253.83 343 L254.33 343 L254.83 343 L255.33 343.89" stroke="#e020e0" stroke-width="1.3" fill="none"/>
<path d="M281.83 344.57 L282.33 343.77 L282.83 342.97 L283.33 342.17 L283.83 341.37 L284.33 340.57 L284.83 339.77 L285.33 339.42 L285.83 339.29 L286.33 339.17 L286.83 339.04 L287.33 338.92 L287.83 338.79 L288.33 339.17 L288.83 339.79 L289.33 340.42 L289.83 341.04 L290.33 341.75 L290.83 342.5 L291.33 343.25 L291.83 344" stroke="#e020e0" stroke-width="1.3" fill="none"/>
<path d="M711.33 344.57 L711.83 344.22 L712.33 343.87 L712.83 343.52 L713.33 343.17 L713.83 342.82 L714.33 342.47 L714.83 342.12 L715.33 343.49" stroke="#e020e0" stroke-width="1.3" fill="none"/>
<path d="M350.83 391.33 L351.33 391.68 L351.83 392.03 L352.33 392.38 L352.83 392.56 L353.33 392.64 L353.83 392.72 L354.33 392.81 L354.83 392.89 L355.33 392.97 L355.83 393.06 L356.33 393.14 L356.83 393.22 L357.33 393.31 L357.83 393.39 L358.33 393.47 L358.83 393.56 L359.33 393.64 L359.83 393.72 L360.33 393.86 L360.83 394.02 L361.33 394.18 L361.83 394.35 L362.33 394.51 L362.83 394.67 L363.33 394.83 L363.83 395 L364.33 395.16 L364.83 395.32 L365.33 395.48 L365.83 395.65 L366.33 395.81 L366.83 395.97 L367.33 396.13 L367.83 396.3 L368.33 396.46 L368.83 396.62 L369.33 396.78 L369.83 396.95 L370.33 396.83 L370.83 396.58 L371.33 396.33 L371.83 396.08 L372.33 395.83 L372.83 395.58 L373.33 395.33 L373.83 395.08 L374.33 394.83 L374.83 394.58 L375.33 394.63 L375.83 394.81 L376.33 395 L376.83 395.19 L377.33 395.38 L377.83 395.57 L378.33 395.76 L378.83 395.95 L379.33 396.14 L379.83 396.33 L380.33 396.51 L380.83 396.7 L381.33 396.89 L381.83 397.08 L382.33 397.27 L382.83 397.46 L383.33 397.65 L383.83 397.84 L384.33 398.03 L384.83 398.21 L385.33 398.4 L385.83 398.59 L386.33 398.61 L386.83 397.78 L387.33 396.94 L387.83 396.11 L388.33 395.28 L388.83 394.44 L389.33 393.61 L389.83 392.78 L390.33 392.58 L390.83 392.71 L391.33 392.83 L391.83 392.96 L392.33 393.08 L392.83 393.21 L393.33 393.33 L393.83 393.46 L394.33 393.58 L394.83 393.71 L395.33 392.95 L395.83 391.75" stroke="#20e020" stroke-width="1.3" fill="none"/>
</g>
<text x="21.5" y="339.2" font-size="11" fill="#f0853a" textLength="15" lengthAdjust="spacingAndGlyphs">RSI</text>
<rect x="19.5" y="327.5" width="884" height="76" fill="none" stroke="#b2c6da" stroke-width="1"/>
<line x1="903.5" y1="367.5" x2="907" y2="367.5" stroke="#b2c6da" stroke-width="1"/>
<text x="911" y="374" font-size="11" fill="#ffffff" stroke="#ffffff" stroke-width="0.15">50</text>
<rect x="20" y="380.5" width="62.5" height="19" rx="2.2" fill="url(#mon)" stroke="#b4c8dc" stroke-width="1"/>
<rect x="19" y="380.5" width="2" height="26.5" fill="#e6f0f4"/>
<text x="27" y="394" font-size="11" fill="#ffffff" stroke="#ffffff" stroke-width="0.1">Май 2020</text>
<rect x="173.8" y="380.5" width="70" height="19" rx="2.2" fill="url(#mon)" stroke="#b4c8dc" stroke-width="1"/>
<rect x="172.8" y="380.5" width="2" height="26.5" fill="#e6f0f4"/>
<text x="180.8" y="394" font-size="11" fill="#ffffff" stroke="#ffffff" stroke-width="0.1">Июнь 2020</text>
<rect x="715.8" y="380.5" width="68.7" height="19" rx="2.2" fill="url(#mon)" stroke="#b4c8dc" stroke-width="1"/>
<rect x="714.8" y="380.5" width="2" height="26.5" fill="#e6f0f4"/>
<text x="722.8" y="394" font-size="11" fill="#ffffff" stroke="#ffffff" stroke-width="0.1">Июль 2020</text>
<line x1="25.5" y1="403.5" x2="25.5" y2="407" stroke="#b2c6da" stroke-width="1"/>
<text x="19.3" y="426" font-size="11" fill="#ffffff" stroke="#ffffff" stroke-width="0.15" textLength="11.2" lengthAdjust="spacingAndGlyphs">22</text>
<line x1="50.5" y1="403.5" x2="50.5" y2="407" stroke="#b2c6da" stroke-width="1"/>
<text x="44.3" y="426" font-size="11" fill="#ffffff" stroke="#ffffff" stroke-width="0.15" textLength="11.2" lengthAdjust="spacingAndGlyphs">25</text>
<line x1="75.5" y1="403.5" x2="75.5" y2="407" stroke="#b2c6da" stroke-width="1"/>
<text x="69.3" y="426" font-size="11" fill="#ffffff" stroke="#ffffff" stroke-width="0.15" textLength="11.2" lengthAdjust="spacingAndGlyphs">26</text>
<line x1="99.5" y1="403.5" x2="99.5" y2="407" stroke="#b2c6da" stroke-width="1"/>
<text x="93.3" y="426" font-size="11" fill="#ffffff" stroke="#ffffff" stroke-width="0.15" textLength="11.2" lengthAdjust="spacingAndGlyphs">27</text>
<line x1="124.5" y1="403.5" x2="124.5" y2="407" stroke="#b2c6da" stroke-width="1"/>
<text x="118.3" y="426" font-size="11" fill="#ffffff" stroke="#ffffff" stroke-width="0.15" textLength="11.2" lengthAdjust="spacingAndGlyphs">28</text>
<line x1="148.5" y1="403.5" x2="148.5" y2="407" stroke="#b2c6da" stroke-width="1"/>
<text x="142.3" y="426" font-size="11" fill="#ffffff" stroke="#ffffff" stroke-width="0.15" textLength="11.2" lengthAdjust="spacingAndGlyphs">29</text>
<line x1="173.5" y1="403.5" x2="173.5" y2="407" stroke="#b2c6da" stroke-width="1"/>
<text x="170.1" y="426" font-size="11" fill="#ffffff" stroke="#ffffff" stroke-width="0.15" textLength="5.6" lengthAdjust="spacingAndGlyphs">1</text>
<line x1="198.5" y1="403.5" x2="198.5" y2="407" stroke="#b2c6da" stroke-width="1"/>
<text x="195.1" y="426" font-size="11" fill="#ffffff" stroke="#ffffff" stroke-width="0.15" textLength="5.6" lengthAdjust="spacingAndGlyphs">2</text>
<line x1="222.5" y1="403.5" x2="222.5" y2="407" stroke="#b2c6da" stroke-width="1"/>
<text x="219.1" y="426" font-size="11" fill="#ffffff" stroke="#ffffff" stroke-width="0.15" textLength="5.6" lengthAdjust="spacingAndGlyphs">3</text>
<line x1="247.5" y1="403.5" x2="247.5" y2="407" stroke="#b2c6da" stroke-width="1"/>
<text x="244.1" y="426" font-size="11" fill="#ffffff" stroke="#ffffff" stroke-width="0.15" textLength="5.6" lengthAdjust="spacingAndGlyphs">4</text>
<line x1="271.5" y1="403.5" x2="271.5" y2="407" stroke="#b2c6da" stroke-width="1"/>
<text x="268.1" y="426" font-size="11" fill="#ffffff" stroke="#ffffff" stroke-width="0.15" textLength="5.6" lengthAdjust="spacingAndGlyphs">5</text>
<line x1="296.5" y1="403.5" x2="296.5" y2="407" stroke="#b2c6da" stroke-width="1"/>
<text x="293.1" y="426" font-size="11" fill="#ffffff" stroke="#ffffff" stroke-width="0.15" textLength="5.6" lengthAdjust="spacingAndGlyphs">8</text>
<line x1="321.5" y1="403.5" x2="321.5" y2="407" stroke="#b2c6da" stroke-width="1"/>
<text x="318.1" y="426" font-size="11" fill="#ffffff" stroke="#ffffff" stroke-width="0.15" textLength="5.6" lengthAdjust="spacingAndGlyphs">9</text>
<line x1="345.5" y1="403.5" x2="345.5" y2="407" stroke="#b2c6da" stroke-width="1"/>
<text x="339.3" y="426" font-size="11" fill="#ffffff" stroke="#ffffff" stroke-width="0.15" textLength="11.2" lengthAdjust="spacingAndGlyphs">10</text>
<line x1="370.5" y1="403.5" x2="370.5" y2="407" stroke="#b2c6da" stroke-width="1"/>
<text x="364.3" y="426" font-size="11" fill="#ffffff" stroke="#ffffff" stroke-width="0.15" textLength="11.2" lengthAdjust="spacingAndGlyphs">11</text>
<line x1="395.5" y1="403.5" x2="395.5" y2="407" stroke="#b2c6da" stroke-width="1"/>
<text x="389.3" y="426" font-size="11" fill="#ffffff" stroke="#ffffff" stroke-width="0.15" textLength="11.2" lengthAdjust="spacingAndGlyphs">12</text>
<line x1="419.5" y1="403.5" x2="419.5" y2="407" stroke="#b2c6da" stroke-width="1"/>
<text x="413.3" y="426" font-size="11" fill="#ffffff" stroke="#ffffff" stroke-width="0.15" textLength="11.2" lengthAdjust="spacingAndGlyphs">15</text>
<line x1="444.5" y1="403.5" x2="444.5" y2="407" stroke="#b2c6da" stroke-width="1"/>
<text x="438.3" y="426" font-size="11" fill="#ffffff" stroke="#ffffff" stroke-width="0.15" textLength="11.2" lengthAdjust="spacingAndGlyphs">16</text>
<line x1="468.5" y1="403.5" x2="468.5" y2="407" stroke="#b2c6da" stroke-width="1"/>
<text x="462.3" y="426" font-size="11" fill="#ffffff" stroke="#ffffff" stroke-width="0.15" textLength="11.2" lengthAdjust="spacingAndGlyphs">17</text>
<line x1="493.5" y1="403.5" x2="493.5" y2="407" stroke="#b2c6da" stroke-width="1"/>
<text x="487.3" y="426" font-size="11" fill="#ffffff" stroke="#ffffff" stroke-width="0.15" textLength="11.2" lengthAdjust="spacingAndGlyphs">18</text>
<line x1="518.5" y1="403.5" x2="518.5" y2="407" stroke="#b2c6da" stroke-width="1"/>
<text x="512.3" y="426" font-size="11" fill="#ffffff" stroke="#ffffff" stroke-width="0.15" textLength="11.2" lengthAdjust="spacingAndGlyphs">19</text>
<line x1="542.5" y1="403.5" x2="542.5" y2="407" stroke="#b2c6da" stroke-width="1"/>
<text x="536.3" y="426" font-size="11" fill="#ffffff" stroke="#ffffff" stroke-width="0.15" textLength="11.2" lengthAdjust="spacingAndGlyphs">22</text>
<line x1="567.5" y1="403.5" x2="567.5" y2="407" stroke="#b2c6da" stroke-width="1"/>
<text x="561.3" y="426" font-size="11" fill="#ffffff" stroke="#ffffff" stroke-width="0.15" textLength="11.2" lengthAdjust="spacingAndGlyphs">23</text>
<line x1="591.5" y1="403.5" x2="591.5" y2="407" stroke="#b2c6da" stroke-width="1"/>
<text x="585.3" y="426" font-size="11" fill="#ffffff" stroke="#ffffff" stroke-width="0.15" textLength="11.2" lengthAdjust="spacingAndGlyphs">24</text>
<line x1="616.5" y1="403.5" x2="616.5" y2="407" stroke="#b2c6da" stroke-width="1"/>
<text x="610.3" y="426" font-size="11" fill="#ffffff" stroke="#ffffff" stroke-width="0.15" textLength="11.2" lengthAdjust="spacingAndGlyphs">25</text>
<line x1="641.5" y1="403.5" x2="641.5" y2="407" stroke="#b2c6da" stroke-width="1"/>
<text x="635.3" y="426" font-size="11" fill="#ffffff" stroke="#ffffff" stroke-width="0.15" textLength="11.2" lengthAdjust="spacingAndGlyphs">26</text>
<line x1="665.5" y1="403.5" x2="665.5" y2="407" stroke="#b2c6da" stroke-width="1"/>
<text x="659.3" y="426" font-size="11" fill="#ffffff" stroke="#ffffff" stroke-width="0.15" textLength="11.2" lengthAdjust="spacingAndGlyphs">29</text>
<line x1="690.5" y1="403.5" x2="690.5" y2="407" stroke="#b2c6da" stroke-width="1"/>
<text x="684.3" y="426" font-size="11" fill="#ffffff" stroke="#ffffff" stroke-width="0.15" textLength="11.2" lengthAdjust="spacingAndGlyphs">30</text>
<line x1="715.5" y1="403.5" x2="715.5" y2="407" stroke="#b2c6da" stroke-width="1"/>
<text x="712.1" y="426" font-size="11" fill="#ffffff" stroke="#ffffff" stroke-width="0.15" textLength="5.6" lengthAdjust="spacingAndGlyphs">1</text>
<line x1="739.5" y1="403.5" x2="739.5" y2="407" stroke="#b2c6da" stroke-width="1"/>
<text x="736.1" y="426" font-size="11" fill="#ffffff" stroke="#ffffff" stroke-width="0.15" textLength="5.6" lengthAdjust="spacingAndGlyphs">2</text>
<line x1="764.5" y1="403.5" x2="764.5" y2="407" stroke="#b2c6da" stroke-width="1"/>
<text x="761.1" y="426" font-size="11" fill="#ffffff" stroke="#ffffff" stroke-width="0.15" textLength="5.6" lengthAdjust="spacingAndGlyphs">3</text>
<line x1="788.5" y1="403.5" x2="788.5" y2="407" stroke="#b2c6da" stroke-width="1"/>
<text x="785.1" y="426" font-size="11" fill="#ffffff" stroke="#ffffff" stroke-width="0.15" textLength="5.6" lengthAdjust="spacingAndGlyphs">6</text>
<line x1="813.5" y1="403.5" x2="813.5" y2="407" stroke="#b2c6da" stroke-width="1"/>
<text x="810.1" y="426" font-size="11" fill="#ffffff" stroke="#ffffff" stroke-width="0.15" textLength="5.6" lengthAdjust="spacingAndGlyphs">7</text>
<line x1="838.5" y1="403.5" x2="838.5" y2="407" stroke="#b2c6da" stroke-width="1"/>
<text x="835.1" y="426" font-size="11" fill="#ffffff" stroke="#ffffff" stroke-width="0.15" textLength="5.6" lengthAdjust="spacingAndGlyphs">8</text>
<line x1="862.5" y1="403.5" x2="862.5" y2="407" stroke="#b2c6da" stroke-width="1"/>
<text x="859.1" y="426" font-size="11" fill="#ffffff" stroke="#ffffff" stroke-width="0.15" textLength="5.6" lengthAdjust="spacingAndGlyphs">9</text>
<line x1="887.5" y1="403.5" x2="887.5" y2="407" stroke="#b2c6da" stroke-width="1"/>
<text x="881.3" y="426" font-size="11" fill="#ffffff" stroke="#ffffff" stroke-width="0.15" textLength="11.2" lengthAdjust="spacingAndGlyphs">10</text>
</g>
</svg>
</body></html>
